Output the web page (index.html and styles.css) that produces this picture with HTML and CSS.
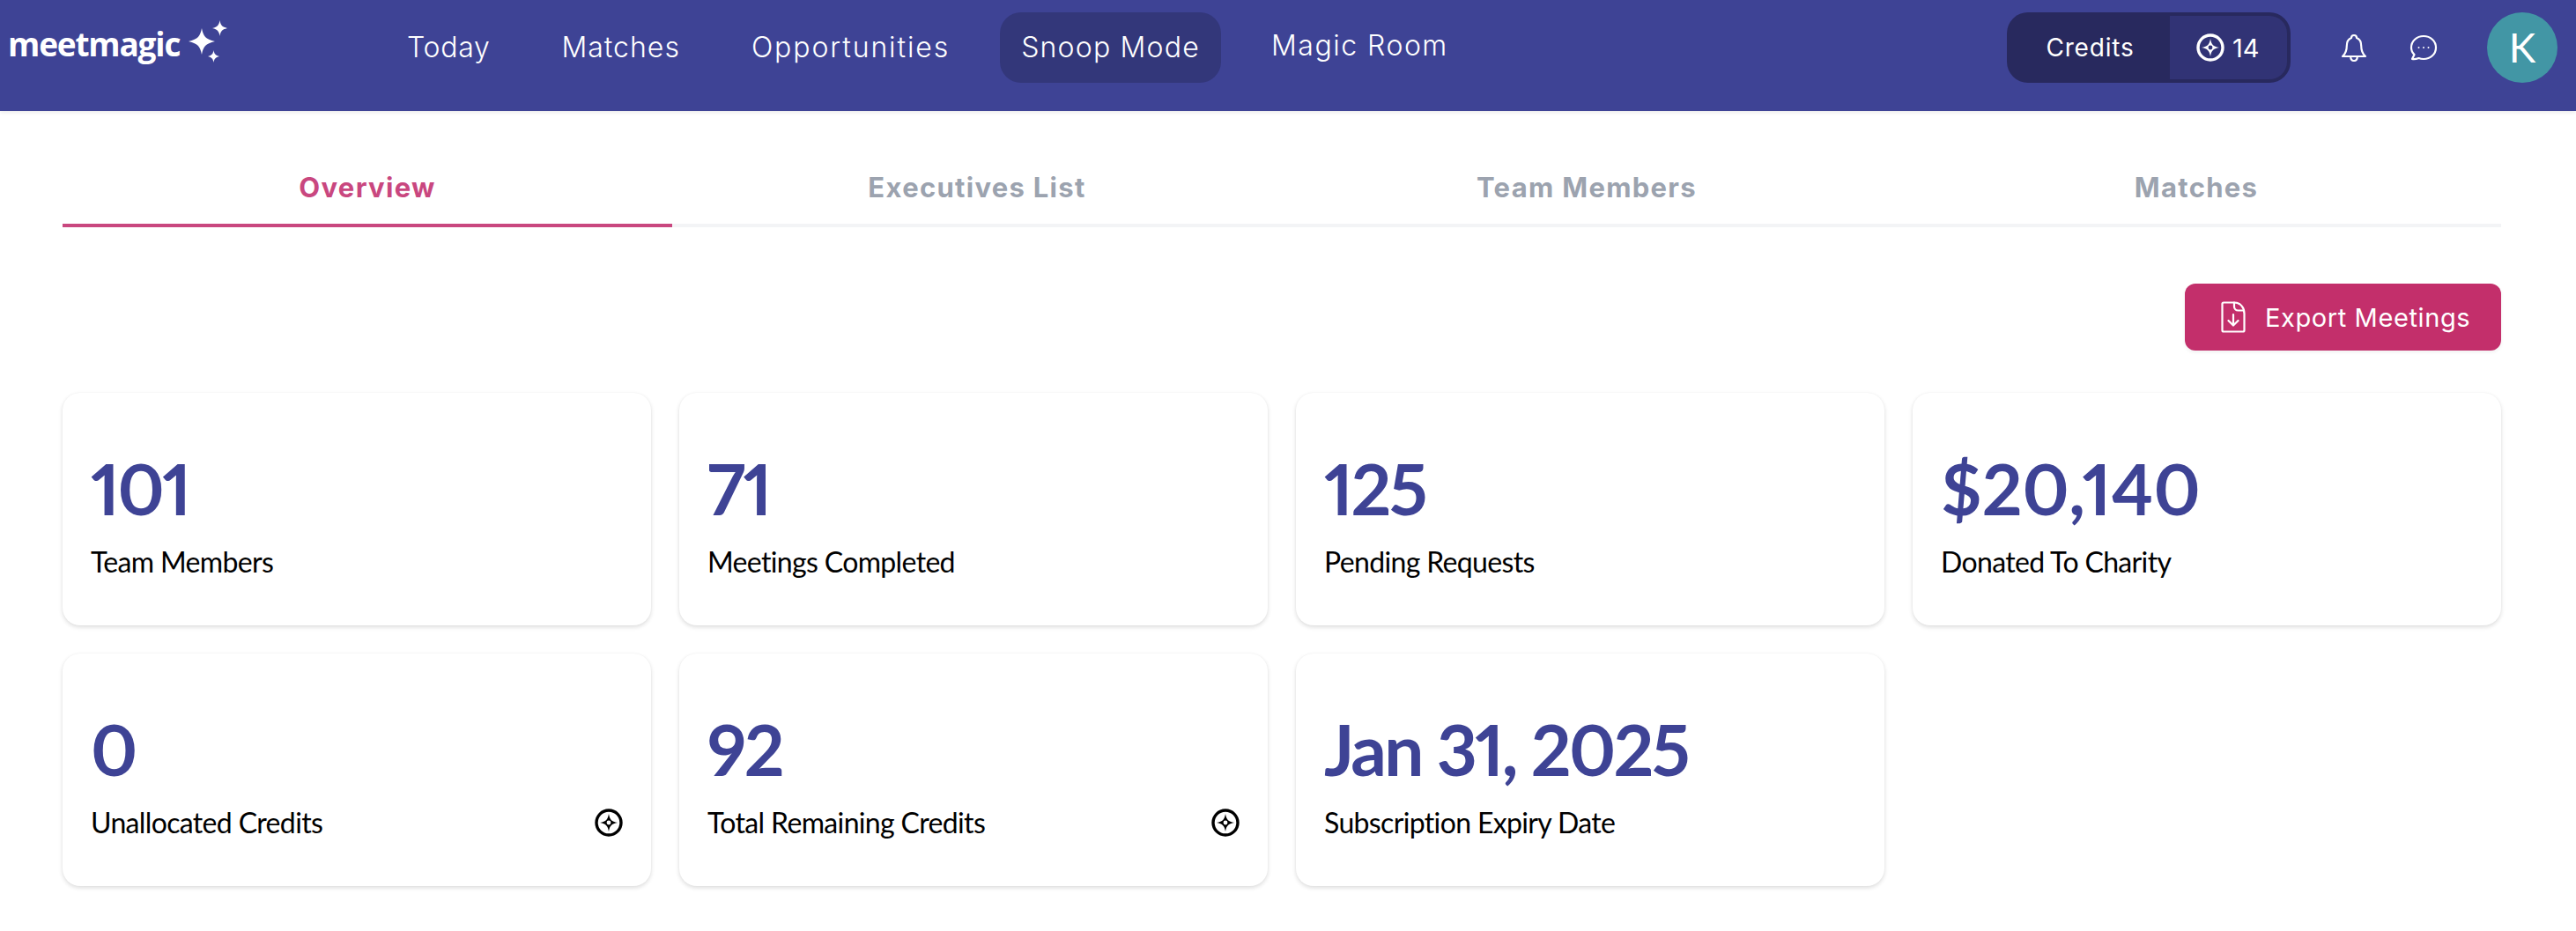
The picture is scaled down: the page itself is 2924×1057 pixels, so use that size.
FILE: index.html
```html
<!DOCTYPE html>
<html lang="en">
<head>
<meta charset="utf-8">
<title>Meetmagic</title>
<link rel="stylesheet" href="styles.css">
</head>
<body>
<svg class="defs" width="0" height="0" aria-hidden="true">
  <symbol id="coin" viewBox="0 0 32 32">
    <circle cx="16" cy="16" r="14" fill="none" stroke="currentColor" stroke-width="3.400"/>
    <path d="M16 6C17 12 19 15 26 16C19 17 17 20 16 26C15 20 13 17 6 16C13 15 15 12 16 6Z" fill="currentColor"/>
    <circle cx="16" cy="16" r="2.400" fill="var(--coin-hole)"/>
  </symbol>
</svg>
<header class="topbar">
  <div class="logo">
    <span class="logo-text">meetmagic</span>
    <svg class="logo-stars" viewBox="0 0 46 51" width="46" height="51">
      <path fill="#fff" d="M17 12C18.800 21 21 24.500 32 27C21 29.500 18.800 33 17 42C15.200 33 13 29.500 2 27C13 24.500 15.200 21 17 12Z"/>
      <path fill="#fff" d="M37.500 3C38.500 8.500 40 10.500 46 12C40 13.500 38.500 15.500 37.500 21C36.500 15.500 35 13.500 29 12C35 10.500 36.500 8.500 37.500 3Z"/>
      <path fill="#fff" d="M30.500 37C31.200 41 32.300 42.800 37 44C32.300 45.200 31.200 47 30.500 51C29.800 47 28.700 45.200 24 44C28.700 42.800 29.800 41 30.500 37Z"/>
    </svg>
  </div>
  <nav class="nav">
    <a class="nav-item nav-today">Today</a>
    <a class="nav-item nav-matches">Matches</a>
    <a class="nav-item nav-opps">Opportunities</a>
    <a class="nav-item nav-active">Snoop Mode</a>
    <a class="nav-item nav-raised">Magic Room</a>
  </nav>
  <div class="actions">
    <div class="credits">
      <span class="credits-label">Credits</span>
      <span class="credits-value">
        <svg class="coin coin-light" width="32" height="32"><use href="#coin"/></svg>
        <span>14</span>
      </span>
    </div>
    <svg class="icon-bell" viewBox="0 0 30 34" width="30" height="34" fill="none" stroke="#fff" stroke-width="2.200" stroke-linejoin="round" stroke-linecap="round">
      <path d="M15 3C12.800 3 12 4.500 12 6C8 7.500 6.800 10.500 6.800 15C6.800 20.500 5.500 24 2 27H28C24.500 24 23.200 20.500 23.200 15C23.200 10.500 22 7.500 18 6C18 4.500 17.200 3 15 3Z"/>
      <path d="M11.200 27C11.200 30 12.800 32 15 32C17.200 32 18.800 30 18.800 27"/>
    </svg>
    <svg class="icon-chat" viewBox="0 0 32 32" width="32" height="32" fill="none" stroke="#fff" stroke-width="2.200" stroke-linejoin="round">
      <path d="M3 29L5.500 24C3.200 21.800 2 19 2 16C2 8.500 8.200 3 16 3C23.800 3 30 8.500 30 16C30 23.500 23.800 29 16 29C14 29 12.200 28.700 10.500 28C8 29 5.500 29.500 3 29Z"/>
      <circle cx="10.500" cy="16" r="1" fill="#fff" stroke="none"/>
      <circle cx="16" cy="16" r="1" fill="#fff" stroke="none"/>
      <circle cx="21.500" cy="16" r="1" fill="#fff" stroke="none"/>
    </svg>
    <div class="avatar">K</div>
  </div>
</header>
<main class="content">
  <div class="tabs">
    <a class="tab tab-active">Overview</a>
    <a class="tab">Executives List</a>
    <a class="tab">Team Members</a>
    <a class="tab">Matches</a>
  </div>
  <div class="toolbar">
    <button class="export" type="button">
      <svg viewBox="0 0 28 36" width="28" height="36" fill="none" stroke="#fff" stroke-width="2.200" stroke-linejoin="round" stroke-linecap="round">
        <path d="M3 1.500H15C22 1.500 26.500 7 26.500 14V33C26.500 34 26 34.500 25 34.500H3C2 34.500 1.500 34 1.500 33V3C1.500 2 2 1.500 3 1.500Z"/>
        <path d="M15 1.500V6C15 8.500 17 10.500 19.500 10.500H26"/>
        <path d="M14 15V27M8.500 22L14 27.500L19.500 22"/>
      </svg>
      <span>Export Meetings</span>
    </button>
  </div>
  <section class="cards">
    <article class="card"><div class="num">101</div><div class="row"><span>Team Members</span></div></article>
    <article class="card"><div class="num">71</div><div class="row"><span>Meetings Completed</span></div></article>
    <article class="card"><div class="num">125</div><div class="row"><span>Pending Requests</span></div></article>
    <article class="card"><div class="num num-money">$20,140</div><div class="row"><span>Donated To Charity</span></div></article>
    <article class="card"><div class="num">0</div><div class="row"><span>Unallocated Credits</span><svg class="coin coin-dark" width="32" height="32"><use href="#coin"/></svg></div></article>
    <article class="card"><div class="num">92</div><div class="row"><span>Total Remaining Credits</span><svg class="coin coin-dark" width="32" height="32"><use href="#coin"/></svg></div></article>
    <article class="card"><div class="num num-date">Jan 31, 2025</div><div class="row"><span>Subscription Expiry Date</span></div></article>
  </section>
</main>
</body>
</html>
```
FILE: styles.css
```css
* { box-sizing: border-box; }
html, body { margin: 0; padding: 0; background: #fff; }
body { height: 1057px; overflow: hidden; font-family: "Inter", "Liberation Sans", sans-serif; }
.defs { position: absolute; }

.topbar {
  height: 126px;
  background: #3e4395;
  box-shadow: 0 2px 4px rgba(0,0,0,.08);
  display: flex;
  align-items: flex-start;
  padding: 14px 21px 0 11px;
  color: #fff;
}
.logo { width: 427px; height: 80px; display: flex; align-items: flex-start; flex: none; }
.logo-text { font: 700 37px/1 "Open Sans", sans-serif; letter-spacing: -1.2px; margin: 17px 0 0 -2px; }
.logo-stars { margin: 6px 0 0 8px; flex: none; }

.nav { display: flex; gap: 33px; align-items: flex-start; }
.nav-item {
  height: 80px;
  padding: 0 24px;
  display: flex;
  align-items: center;
  font: 300 32px/40px "Inter", sans-serif;
  border-radius: 24px;
  white-space: nowrap;
  letter-spacing: 1.4px;
}
.nav-today { letter-spacing: .7px; }
.nav-matches { letter-spacing: 1px; }
.nav-opps { letter-spacing: 1.9px; }
.nav-active { background: #33377a; letter-spacing: 1.2px; }
.nav-raised { padding-bottom: 4px; letter-spacing: 1.5px; }

.actions { margin-left: auto; display: flex; align-items: flex-start; }
.credits {
  width: 322px;
  height: 80px;
  background: #28295e;
  border-radius: 24px;
  padding: 4px;
  display: flex;
  margin-right: 57px;
}
.credits-label { width: 181px; font: 400 28px/72px "Inter", sans-serif; text-align: center; letter-spacing: .8px; }
.credits-value {
  flex: 1;
  background: #313375;
  border-radius: 0 20px 20px 0;
  display: flex;
  align-items: center;
  gap: 9px;
  padding-left: 30px;
  font: 400 29px/1 "Inter", sans-serif;
}
.coin { display: block; flex: none; }
.coin-light { color: #fff; --coin-hole: #313375; }
.coin-dark { color: #000; --coin-hole: #fff; }
.icon-bell { margin: 23px 48px 0 0; flex: none; }
.icon-chat { margin: 24px 56px 0 0; flex: none; }
.avatar {
  width: 80px;
  height: 80px;
  border-radius: 50%;
  background: #4296a5;
  display: flex;
  align-items: center;
  justify-content: center;
  font: 400 46px/1 "Lato", sans-serif;
}

.content { padding: 0 85px 0 71px; }
.tabs { display: grid; grid-template-columns: repeat(4, 1fr); }
.tab {
  height: 132px;
  padding-top: 69px;
  border-bottom: 4px solid #f3f4f6;
  text-align: center;
  font: 700 31px/36px "Inter", sans-serif;
  letter-spacing: 1.3px;
  color: #9ca3af;
}
.tab-active { color: #c9477f; border-bottom-color: #c9477f; }

.toolbar { display: flex; justify-content: flex-end; margin-top: 64px; }
.export {
  width: 359px;
  height: 76px;
  border: 0;
  border-radius: 12px;
  background: #c32f6b;
  box-shadow: 0 2px 4px rgba(0,0,0,.06);
  color: #fff;
  display: flex;
  align-items: center;
  gap: 22px;
  padding: 0 0 0 41px;
  font: 400 29px/1 "Inter", sans-serif;
  letter-spacing: .6px;
}

.cards {
  margin-top: 48px;
  display: grid;
  grid-template-columns: repeat(4, 1fr);
  gap: 32px;
}
.card {
  height: 264px;
  padding: 68px 32px 0;
  background: #fff;
  border-radius: 20px;
  box-shadow: 0 2px 5px rgba(0,0,0,.14), 0 0 2px rgba(0,0,0,.03);
}
.num {
  font: 700 80px/80px "Lato", sans-serif;
  font-variant-numeric: proportional-nums;
  letter-spacing: -2.500px;
  color: #3e4395;
  white-space: nowrap;
}
.num-money { letter-spacing: 0; }
.num-date { letter-spacing: -2.600px; }
.row {
  margin-top: 24px;
  display: flex;
  justify-content: space-between;
  align-items: center;
  height: 40px;
  font: 400 32px/40px "Lato", sans-serif;
  letter-spacing: -.65px;
  color: #000;
}
```
